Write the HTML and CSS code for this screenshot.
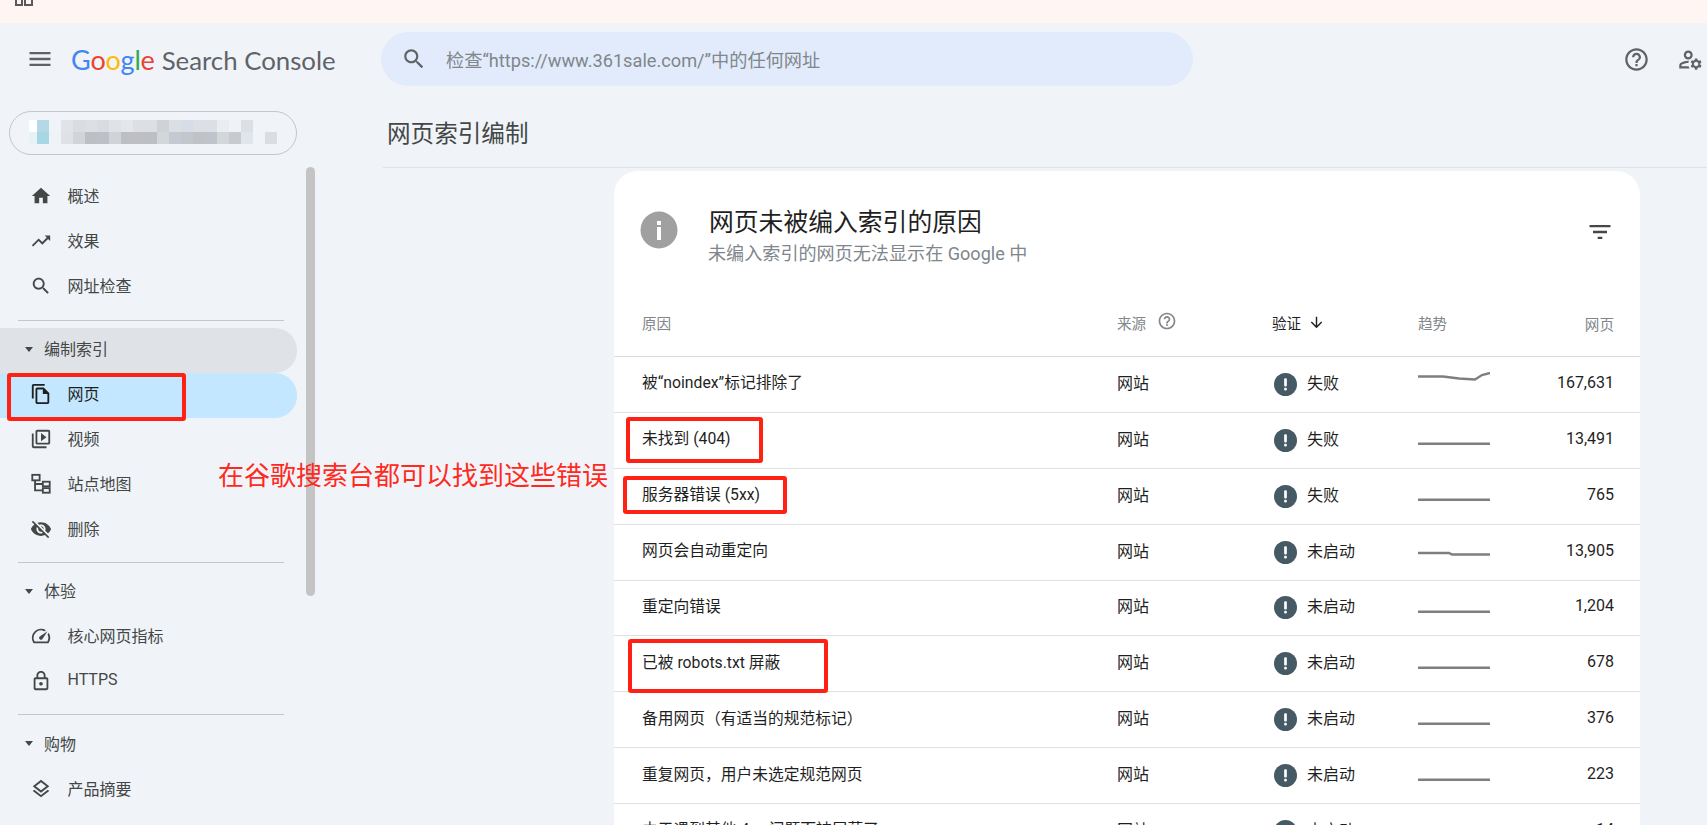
FILE: index.html
```html
<!DOCTYPE html>
<html lang="zh-CN">
<head>
<meta charset="utf-8">
<title>网页索引编制</title>
<link rel="stylesheet" href="styles.css">
</head>
<body>
<div class="topbar">
  <svg class="apps" width="18" height="6" viewBox="0 0 18 6"><path d="M1 0v5h6V0M10 0v5h7V0" fill="none" stroke="#5a5a5a" stroke-width="2"/></svg>
</div>
<header class="header">
  <svg class="menu-icon" viewBox="0 0 24 24"><path d="M3 18h18v-2H3v2zm0-5h18v-2H3v2zm0-7v2h18V6H3z"/></svg>
  <div class="logo"><span class="logo-word"><span class="g-blue">G</span><span class="g-red">o</span><span class="g-yellow">o</span><span class="g-blue">g</span><span class="g-green">l</span><span class="g-red">e</span></span><span class="logo-product">Search Console</span></div>
  <div class="search">
    <svg class="search-icon" viewBox="0 0 24 24"><path d="M15.5 14h-.79l-.28-.27C15.41 12.59 16 11.11 16 9.5 16 5.91 13.09 3 9.5 3S3 5.91 3 9.5 5.91 16 9.5 16c1.61 0 3.09-.59 4.23-1.57l.27.28v.79l5 4.99L20.49 19l-4.99-5zm-6 0C7.01 14 5 11.99 5 9.5S7.01 5 9.5 5 14 7.01 14 9.5 11.99 14 9.5 14z"/></svg>
    <span class="search-text">检查“https://www.361sale.com/”中的任何网址</span>
  </div>
  <div class="header-actions">
    <svg class="action-icon" viewBox="0 0 24 24"><path d="M11 18h2v-2h-2v2zm1-16C6.48 2 2 6.48 2 12s4.48 10 10 10 10-4.48 10-10S17.52 2 12 2zm0 18c-4.41 0-8-3.59-8-8s3.59-8 8-8 8 3.59 8 8-3.59 8-8 8zm0-14c-2.21 0-4 1.79-4 4h2c0-1.1.9-2 2-2s2 .9 2 2c0 2-3 1.75-3 5h2c0-2.25 3-2.5 3-5 0-2.21-1.79-4-4-4z"/></svg>
    <svg class="action-icon" viewBox="0 0 24 24"><path d="M4 18v-.65c0-.34.16-.66.41-.81C6.1 15.53 8.03 15 10 15c.03 0 .05 0 .08.01.1-.7.3-1.37.59-1.98-.22-.02-.44-.03-.67-.03-2.42 0-4.68.67-6.61 1.82-.88.52-1.39 1.5-1.39 2.53V20h9.26c-.42-.6-.75-1.28-.97-2H4zM10 12c2.21 0 4-1.79 4-4s-1.79-4-4-4-4 1.79-4 4 1.79 4 4 4zm0-6c1.1 0 2 .9 2 2s-.9 2-2 2-2-.9-2-2 .9-2 2-2zM20.75 16c0-.22-.03-.42-.06-.63l1.14-1.01-1-1.73-1.45.49c-.32-.27-.68-.48-1.08-.63L18 11h-2l-.3 1.49c-.4.15-.76.36-1.08.63l-1.45-.49-1 1.73 1.14 1.01c-.03.21-.06.41-.06.63s.03.42.06.63l-1.14 1.01 1 1.73 1.45-.49c.32.27.68.48 1.08.63L16 21h2l.3-1.49c.4-.15.76-.36 1.08-.63l1.45.49 1-1.73-1.14-1.01c.03-.21.06-.41.06-.63zM17 18c-1.1 0-2-.9-2-2s.9-2 2-2 2 .9 2 2-.9 2-2 2z"/></svg>
  </div>
</header>
<div class="shell">
  <aside class="sidebar">
    <div class="property">
      <svg class="mosaic" width="252" height="24" viewBox="0 0 252 24">
        <rect x="0" y="0" width="12" height="12" fill="#ffffff"/><rect x="8" y="0" width="12" height="12" fill="#b5d8e6"/><rect x="20" y="0" width="12" height="12" fill="#f0f4f9"/><rect x="32" y="0" width="12" height="12" fill="#e0e3e7"/><rect x="44" y="0" width="12" height="12" fill="#d9dce0"/><rect x="56" y="0" width="12" height="12" fill="#dcdfe3"/><rect x="68" y="0" width="12" height="12" fill="#d8dbe0"/><rect x="80" y="0" width="12" height="12" fill="#dfe2e6"/><rect x="92" y="0" width="12" height="12" fill="#e3e6ea"/><rect x="104" y="0" width="12" height="12" fill="#dcdfe3"/><rect x="116" y="0" width="12" height="12" fill="#dcdfe3"/><rect x="128" y="0" width="12" height="12" fill="#cfd2d6"/><rect x="140" y="0" width="12" height="12" fill="#dbdee2"/><rect x="152" y="0" width="12" height="12" fill="#d6dde6"/><rect x="164" y="0" width="12" height="12" fill="#dcdfe3"/><rect x="176" y="0" width="12" height="12" fill="#dcdfe3"/><rect x="188" y="0" width="12" height="12" fill="#e9ecf1"/><rect x="200" y="0" width="12" height="12" fill="#eff3f8"/><rect x="212" y="0" width="12" height="12" fill="#dcdfe4"/>
        <rect x="0" y="12" width="8" height="12" fill="#e6f2f4"/><rect x="8" y="12" width="12" height="12" fill="#a6d7e3"/><rect x="20" y="12" width="12" height="12" fill="#eff3f8"/><rect x="32" y="12" width="12" height="12" fill="#dee1e6"/><rect x="44" y="12" width="12" height="12" fill="#d1d4d9"/><rect x="56" y="12" width="12" height="12" fill="#bdbfc2"/><rect x="68" y="12" width="12" height="12" fill="#bdc0c8"/><rect x="80" y="12" width="12" height="12" fill="#d0d3d7"/><rect x="92" y="12" width="36" height="12" fill="#bdbfc3"/><rect x="128" y="12" width="12" height="12" fill="#d3d6da"/><rect x="140" y="12" width="12" height="12" fill="#c5cad2"/><rect x="152" y="12" width="12" height="12" fill="#c3c6ca"/><rect x="164" y="12" width="12" height="12" fill="#c0c2c6"/><rect x="176" y="12" width="12" height="12" fill="#bfc3cb"/><rect x="188" y="12" width="12" height="12" fill="#d3d6da"/><rect x="200" y="12" width="12" height="12" fill="#c8cacd"/><rect x="212" y="12" width="12" height="12" fill="#e0e4ec"/><rect x="224" y="12" width="12" height="12" fill="#f0f3f8"/><rect x="236" y="12" width="12" height="12" fill="#dadde2"/>
      </svg>
    </div>
    <nav class="nav">
      <a class="nav-item"><svg class="nav-icon" viewBox="0 0 24 24"><path d="M10 20v-6h4v6h5v-8h3L12 3 2 12h3v8z"/></svg>概述</a>
      <a class="nav-item"><svg class="nav-icon" viewBox="0 0 24 24"><path d="M16 6l2.29 2.29-4.88 4.88-4-4L2 16.59 3.41 18l6-6 4 4 6.3-6.29L22 12V6z"/></svg>效果</a>
      <a class="nav-item"><svg class="nav-icon" viewBox="0 0 24 24"><path d="M15.5 14h-.79l-.28-.27C15.41 12.59 16 11.11 16 9.5 16 5.91 13.09 3 9.5 3S3 5.91 3 9.5 5.91 16 9.5 16c1.61 0 3.09-.59 4.23-1.57l.27.28v.79l5 4.99L20.49 19l-4.99-5zm-6 0C7.01 14 5 11.99 5 9.5S7.01 5 9.5 5 14 7.01 14 9.5 11.99 14 9.5 14z"/></svg>网址检查</a>
      <div class="nav-divider nav-divider-first"></div>
      <a class="nav-group nav-group-open"><span class="caret"></span>编制索引</a>
      <a class="nav-item nav-item-active"><svg class="nav-icon" viewBox="0 0 24 24"><path d="M16 1H4c-1.1 0-2 .9-2 2v14h2V3h12V1zm-1 4H8c-1.1 0-1.99.9-1.99 2L6 21c0 1.1.89 2 1.99 2H19c1.1 0 2-.9 2-2V11l-6-6zM8 21V7h6v5h5v9H8z"/></svg>网页</a>
      <a class="nav-item"><svg class="nav-icon" viewBox="0 0 24 24"><path d="M4 6H2v14c0 1.1.9 2 2 2h14v-2H4V6zm16-4H8c-1.1 0-2 .9-2 2v12c0 1.1.9 2 2 2h12c1.1 0 2-.9 2-2V4c0-1.1-.9-2-2-2zm0 14H8V4h12v12zM12 5.5v9l6-4.5z"/></svg>视频</a>
      <a class="nav-item"><svg class="nav-icon nav-icon-lines" viewBox="0 0 24 24"><rect x="2.5" y="2" width="8" height="6"/><rect x="14" y="9.5" width="7.5" height="5"/><rect x="14" y="16.5" width="7.5" height="5"/><path d="M5.5 8v11H14M5.5 12H14"/></svg>站点地图</a>
      <a class="nav-item"><svg class="nav-icon" viewBox="0 0 24 24"><path d="M12 7c2.76 0 5 2.24 5 5 0 .65-.13 1.26-.36 1.83l2.92 2.92c1.51-1.26 2.7-2.89 3.43-4.75-1.73-4.39-6-7.5-11-7.5-1.4 0-2.74.25-3.98.7l2.16 2.16C10.74 7.13 11.35 7 12 7zM2 4.27l2.28 2.28.46.46C3.08 8.3 1.78 10.02 1 12c1.73 4.39 6 7.5 11 7.5 1.55 0 3.03-.3 4.38-.84l.42.42L19.73 22 21 20.73 3.27 3 2 4.27zM7.53 9.8l1.55 1.55c-.05.21-.08.43-.08.65 0 1.66 1.34 3 3 3 .22 0 .44-.03.65-.08l1.55 1.55c-.67.33-1.41.53-2.2.53-2.76 0-5-2.24-5-5 0-.79.2-1.53.53-2.2zm4.31-.78l3.15 3.15.02-.16c0-1.66-1.34-3-3-3l-.17.01z"/></svg>删除</a>
      <div class="nav-divider"></div>
      <a class="nav-group"><span class="caret"></span>体验</a>
      <a class="nav-item"><svg class="nav-icon" viewBox="0 0 24 24"><path d="M20.38 8.57l-1.23 1.85a8 8 0 0 1-.22 7.58H5.07A8 8 0 0 1 15.58 6.85l1.85-1.23A10 10 0 0 0 3.35 19a2 2 0 0 0 1.72 1h13.85a2 2 0 0 0 1.74-1 10 10 0 0 0-.27-10.44zm-9.79 6.84a2 2 0 0 0 2.83 0l5.66-8.49-8.49 5.66a2 2 0 0 0 0 2.83z"/></svg>核心网页指标</a>
      <a class="nav-item"><svg class="nav-icon" viewBox="0 0 24 24"><path d="M18 8h-1V6c0-2.76-2.24-5-5-5S7 3.24 7 6v2H6c-1.1 0-2 .9-2 2v10c0 1.1.9 2 2 2h12c1.1 0 2-.9 2-2V10c0-1.1-.9-2-2-2zM9 6c0-1.66 1.34-3 3-3s3 1.34 3 3v2H9V6zm9 14H6V10h12v10zm-6-3c1.1 0 2-.9 2-2s-.9-2-2-2-2 .9-2 2 .9 2 2 2z"/></svg>HTTPS</a>
      <div class="nav-divider"></div>
      <a class="nav-group"><span class="caret"></span>购物</a>
      <a class="nav-item"><svg class="nav-icon" viewBox="0 0 24 24"><path d="M11.99 18.54l-7.37-5.73L3 14.07l9 7 9-7-1.63-1.27zM12 16l7.36-5.73L21 9l-9-7-9 7 1.63 1.27L12 16zm0-11.47L17.74 9 12 13.47 6.26 9 12 4.53z"/></svg>产品摘要</a>
    </nav>
    <div class="scrollbar"></div>
  </aside>
  <main class="main">
    <h1 class="page-title">网页索引编制</h1>
    <section class="card">
      <div class="card-head">
        <svg class="info-icon" viewBox="0 0 38 38"><circle cx="19" cy="19" r="18.5" fill="#a0a0a0"/><rect x="17" y="16" width="4" height="13" fill="#fff"/><rect x="17" y="10" width="4" height="4" fill="#fff"/></svg>
        <div class="card-titles">
          <h2 class="card-title">网页未被编入索引的原因</h2>
          <p class="card-sub">未编入索引的网页无法显示在 Google 中</p>
        </div>
        <svg class="filter-icon" viewBox="0 0 24 24"><path d="M10 18h4v-2h-4v2zM3 6v2h18V6H3zm3 7h12v-2H6v2z"/></svg>
      </div>
      <div class="table">
        <div class="row row-head">
          <span>原因</span>
          <span class="head-source">来源<svg class="mini-help" viewBox="0 0 24 24"><path d="M11 18h2v-2h-2v2zm1-16C6.48 2 2 6.48 2 12s4.48 10 10 10 10-4.48 10-10S17.52 2 12 2zm0 18c-4.41 0-8-3.59-8-8s3.59-8 8-8 8 3.59 8 8-3.59 8-8 8zm0-14c-2.21 0-4 1.79-4 4h2c0-1.1.9-2 2-2s2 .9 2 2c0 2-3 1.75-3 5h2c0-2.25 3-2.5 3-5 0-2.21-1.79-4-4-4z"/></svg></span>
          <span class="head-sorted">验证<svg class="sort-icon" viewBox="0 0 24 24"><path d="M20 12l-1.41-1.41L13 16.17V4h-2v12.17l-5.58-5.59L4 12l8 8 8-8z"/></svg></span>
          <span>趋势</span>
          <span class="num">网页</span>
        </div>
        <div class="row">
          <span class="reason">被“noindex”标记排除了</span><span>网站</span>
          <span class="status"><svg class="err" viewBox="0 0 24 24"><circle cx="12" cy="12" r="12"/><rect x="10.6" y="5.5" width="2.8" height="8.5" rx="1" fill="#fff"/><rect x="10.6" y="15.5" width="2.8" height="2.8" rx="1" fill="#fff"/></svg>失败</span>
          <svg class="trend" viewBox="0 0 72 24"><polyline points="0,4.5 25,4.5 41,6.5 57,7.5 64,3 72,1"/></svg>
          <span class="num">167,631</span>
        </div>
        <div class="row">
          <span class="reason">未找到 (404)</span><span>网站</span>
          <span class="status"><svg class="err" viewBox="0 0 24 24"><circle cx="12" cy="12" r="12"/><rect x="10.6" y="5.5" width="2.8" height="8.5" rx="1" fill="#fff"/><rect x="10.6" y="15.5" width="2.8" height="2.8" rx="1" fill="#fff"/></svg>失败</span>
          <svg class="trend" viewBox="0 0 72 24"><polyline points="0,15.7 72,15.7"/></svg>
          <span class="num">13,491</span>
        </div>
        <div class="row">
          <span class="reason">服务器错误 (5xx)</span><span>网站</span>
          <span class="status"><svg class="err" viewBox="0 0 24 24"><circle cx="12" cy="12" r="12"/><rect x="10.6" y="5.5" width="2.8" height="8.5" rx="1" fill="#fff"/><rect x="10.6" y="15.5" width="2.8" height="2.8" rx="1" fill="#fff"/></svg>失败</span>
          <svg class="trend" viewBox="0 0 72 24"><polyline points="0,15.7 72,15.7"/></svg>
          <span class="num">765</span>
        </div>
        <div class="row">
          <span class="reason">网页会自动重定向</span><span>网站</span>
          <span class="status"><svg class="err" viewBox="0 0 24 24"><circle cx="12" cy="12" r="12"/><rect x="10.6" y="5.5" width="2.8" height="8.5" rx="1" fill="#fff"/><rect x="10.6" y="15.5" width="2.8" height="2.8" rx="1" fill="#fff"/></svg>未启动</span>
          <svg class="trend" viewBox="0 0 72 24"><polyline points="0,13 31,13 34,14.5 72,14.5"/></svg>
          <span class="num">13,905</span>
        </div>
        <div class="row">
          <span class="reason">重定向错误</span><span>网站</span>
          <span class="status"><svg class="err" viewBox="0 0 24 24"><circle cx="12" cy="12" r="12"/><rect x="10.6" y="5.5" width="2.8" height="8.5" rx="1" fill="#fff"/><rect x="10.6" y="15.5" width="2.8" height="2.8" rx="1" fill="#fff"/></svg>未启动</span>
          <svg class="trend" viewBox="0 0 72 24"><polyline points="0,15.7 72,15.7"/></svg>
          <span class="num">1,204</span>
        </div>
        <div class="row">
          <span class="reason">已被 robots.txt 屏蔽</span><span>网站</span>
          <span class="status"><svg class="err" viewBox="0 0 24 24"><circle cx="12" cy="12" r="12"/><rect x="10.6" y="5.5" width="2.8" height="8.5" rx="1" fill="#fff"/><rect x="10.6" y="15.5" width="2.8" height="2.8" rx="1" fill="#fff"/></svg>未启动</span>
          <svg class="trend" viewBox="0 0 72 24"><polyline points="0,15.7 72,15.7"/></svg>
          <span class="num">678</span>
        </div>
        <div class="row">
          <span class="reason">备用网页（有适当的规范标记）</span><span>网站</span>
          <span class="status"><svg class="err" viewBox="0 0 24 24"><circle cx="12" cy="12" r="12"/><rect x="10.6" y="5.5" width="2.8" height="8.5" rx="1" fill="#fff"/><rect x="10.6" y="15.5" width="2.8" height="2.8" rx="1" fill="#fff"/></svg>未启动</span>
          <svg class="trend" viewBox="0 0 72 24"><polyline points="0,15.7 72,15.7"/></svg>
          <span class="num">376</span>
        </div>
        <div class="row">
          <span class="reason">重复网页，用户未选定规范网页</span><span>网站</span>
          <span class="status"><svg class="err" viewBox="0 0 24 24"><circle cx="12" cy="12" r="12"/><rect x="10.6" y="5.5" width="2.8" height="8.5" rx="1" fill="#fff"/><rect x="10.6" y="15.5" width="2.8" height="2.8" rx="1" fill="#fff"/></svg>未启动</span>
          <svg class="trend" viewBox="0 0 72 24"><polyline points="0,15.7 72,15.7"/></svg>
          <span class="num">223</span>
        </div>
        <div class="row">
          <span class="reason">由于遇到其他 4xx 问题而被屏蔽了</span><span>网站</span>
          <span class="status"><svg class="err" viewBox="0 0 24 24"><circle cx="12" cy="12" r="12"/><rect x="10.6" y="5.5" width="2.8" height="8.5" rx="1" fill="#fff"/><rect x="10.6" y="15.5" width="2.8" height="2.8" rx="1" fill="#fff"/></svg>未启动</span>
          <svg class="trend" viewBox="0 0 72 24"><polyline points="0,15.7 72,15.7"/></svg>
          <span class="num">14</span>
        </div>
      </div>
    </section>
  </main>
</div>
<div class="mark mark-pages"></div>
<div class="mark mark-404"></div>
<div class="mark mark-5xx"></div>
<div class="mark mark-robots"></div>
<div class="annotation">在谷歌搜索台都可以找到这些错误</div>
</body>
</html>
```

FILE: styles.css
```css
* { box-sizing: border-box; }
html, body { height: 100%; }
body {
  margin: 0;
  height: 825px;
  overflow: hidden;
  position: relative;
  background: #f0f4f9;
  color: #1f1f1f;
  font-family: Roboto, "Noto Sans CJK SC", sans-serif;
  font-size: 16px;
}
.topbar { height: 23px; background: #fff6f3; padding-left: 15px; }
.apps { display: block; }

.header { height: 77px; padding: 9px 3px 14px 26px; display: flex; align-items: center; }
.menu-icon { width: 28px; height: 28px; fill: #5f6368; flex: none; }
.logo { width: 327px; flex: none; padding-left: 17px; display: flex; align-items: baseline; gap: 7px; font-family: Lato, "Open Sans", sans-serif; }
.logo-word { font-size: 27px; letter-spacing: -0.2px; }
.logo-product { font-size: 25.8px; color: #5f6368; }
.g-blue { color: #4285f4; }
.g-red { color: #ea4335; }
.g-yellow { color: #fbbc05; }
.g-green { color: #34a853; }
.search { width: 812px; height: 54px; border-radius: 27px; background: #e2ebfb; display: flex; align-items: center; padding-left: 20px; flex: none; }
.search-icon { width: 26px; height: 26px; fill: #5f6368; flex: none; }
.search-text { margin-left: 19px; font-size: 18.2px; color: #80868b; }
.header-actions { margin-left: auto; display: flex; gap: 27px; }
.action-icon { width: 27px; height: 27px; fill: #5f6368; display: block; }

.shell { display: flex; height: 725px; }
.sidebar { width: 383px; flex: none; position: relative; padding-top: 11px; }
.property { width: 288px; height: 44px; margin-left: 9px; border: 1px solid #c4c7c5; border-radius: 22px; padding: 8px 0 0 19px; }
.mosaic { display: block; }
.nav { width: 297px; margin-top: 20px; }
.nav-item, .nav-group { display: flex; align-items: center; height: 44.8px; padding-bottom: 4px; color: #444746; font-size: 16px; }
.nav-item { padding-left: 29.5px; }
.nav-icon { width: 22px; height: 22px; fill: #444746; margin: 2px 16px 0 0; flex: none; }
.nav-icon-lines { fill: none; stroke: #444746; stroke-width: 2; }
.nav-item-active { background: #c2e7ff; border-radius: 0 22px 22px 0; color: #1f1f1f; }
.nav-item-active .nav-icon { fill: #1f1f1f; }
.nav-group { padding-left: 25px; }
.nav-group-open { background: #dfe2e7; border-radius: 0 22px 22px 0; }
.caret { width: 0; height: 0; border: 4.5px solid transparent; border-top: 5px solid #444746; border-bottom: 0; margin: 2px 11px 0 0; }
.nav-divider { height: 1px; background: #c4c7c5; margin: 10px 13px 7px 18px; }
.nav-divider-first { margin-top: 10.6px; }
.scrollbar { position: absolute; left: 306px; top: 67px; width: 9px; height: 429px; background: #c4c4c4; border-radius: 5px; }

.main { flex: 1; min-width: 0; }
.page-title { margin: 0; height: 68px; padding: 14px 0 0 4px; border-bottom: 1px solid #dfe3e8; font-size: 23.6px; font-weight: 400; line-height: 40px; color: #444746; }
.card { width: 1026px; height: 654px; overflow: hidden; margin: 3px 0 0 231px; background: #fff; border-radius: 24px 24px 0 0; }
.card-head { height: 125px; display: flex; padding: 39.5px 26px 0 26px; }
.info-icon { width: 38px; height: 38px; flex: none; }
.card-titles { margin-left: 31px; margin-top: -5.5px; }
.card-title { margin: 0; font-size: 24.8px; font-weight: 400; line-height: 36px; color: #1f1f1f; }
.card-sub { margin: -1px 0 0 -1px; font-size: 18.1px; line-height: 28px; color: #80868b; }
.filter-icon { width: 28px; height: 28px; fill: #444746; margin-left: auto; margin-top: 7.5px; flex: none; }

.row { display: grid; grid-template-columns: 475px 157px 144px 72px 1fr; align-items: center; height: 55.875px; padding: 0 26px 0 28px; border-bottom: 1px solid #e0e0e0; }
.row > span { padding-bottom: 5px; }
.row > .num { padding-bottom: 4px; }
.reason { font-size: 15.75px; }
.row-head { height: 61px; padding-bottom: 2px; font-size: 14.6px; color: #80868b; border-bottom: 1px solid #dadce0; }
.head-source { display: flex; align-items: center; }
.mini-help { width: 20px; height: 20px; fill: #80868b; margin: -3px 0 0 11px; }
.head-sorted { display: flex; align-items: center; color: #1f1f1f; margin-left: -2px; }
.sort-icon { width: 17px; height: 17px; fill: #1f1f1f; margin-left: 7px; }
.status { display: flex; align-items: center; }
.err { width: 23px; height: 23px; fill: #455a64; margin: 5px 10px 0 0; flex: none; }
.trend { width: 72px; height: 24px; display: block; }
.trend polyline { fill: none; stroke: #7f7f7f; stroke-width: 2.4; }
.num { text-align: right; }

.mark { position: absolute; border: 4px solid #ff2214; border-radius: 3px; }
.mark-pages { left: 7px; top: 373px; width: 179px; height: 48px; }
.mark-404 { left: 626px; top: 417px; width: 137px; height: 46px; }
.mark-5xx { left: 623px; top: 476px; width: 164px; height: 38px; }
.mark-robots { left: 628px; top: 639px; width: 200px; height: 54px; }
.annotation { position: absolute; left: 218px; top: 458px; font-size: 26px; line-height: 36px; color: #ff2a1e; white-space: nowrap; }
```
